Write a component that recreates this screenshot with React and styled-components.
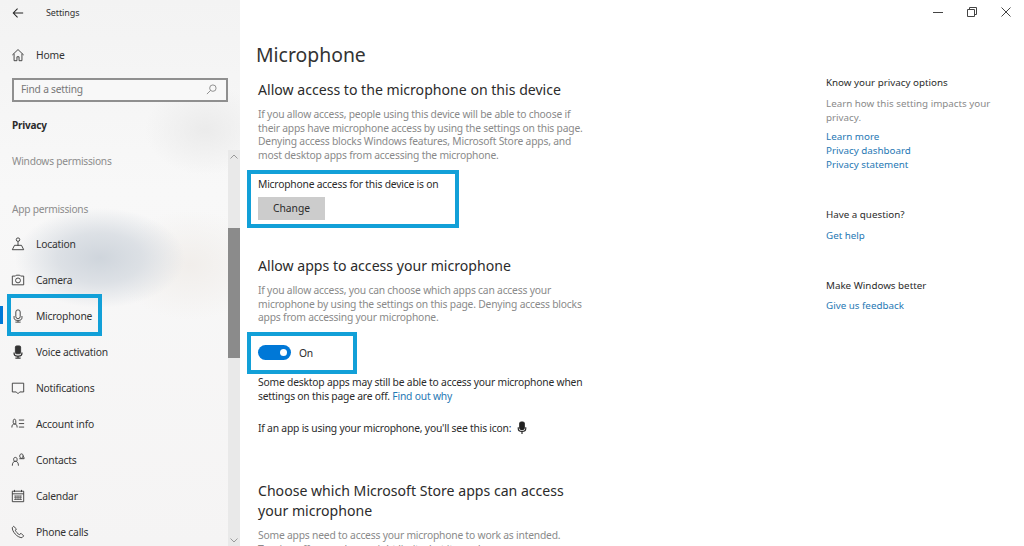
import React from "react";
import styled, { createGlobalStyle } from "styled-components";

const GlobalStyle = createGlobalStyle`
  html, body { margin: 0; padding: 0; background: #fff; }
  body { font-family: "Noto Sans", "Open Sans", "Liberation Sans", sans-serif; color: #222; }
  * { box-sizing: border-box; }
`;

// Thin line icons, drawn to look like the Segoe MDL2 glyphs
const Svg = ({ children, size = 14, fill = "none", color = "#333", width = 1 }) => (
  <svg width={size} height={size} viewBox="0 0 16 16" fill={fill} stroke={color} strokeWidth={width}>
    {children}
  </svg>
);

const icons = {
  location: (
    <Svg>
      <circle cx="8" cy="3" r="2" />
      <path d="M8 5v5M1.500 14.500l2.500-5h8l2.500 5z" />
    </Svg>
  ),
  camera: (
    <Svg>
      <path d="M1.500 3.500h3.500l1-1h4l1 1h3.500v10h-13z" />
      <circle cx="8" cy="8.500" r="2.800" />
    </Svg>
  ),
  mic: (
    <Svg>
      <rect x="5.500" y="1" width="5" height="10" rx="2.400" />
      <path d="M3.500 8v2c0 2 1.500 3 3.500 3h2c2 0 3.500-1 3.500-3V8M8 13v2M5 15h6" />
    </Svg>
  ),
  voice: (
    <Svg>
      <rect x="5" y="1" width="6" height="9" rx="1.500" fill="#333" />
      <path d="M3.500 8.500v1c0 2 1.500 3.200 3.500 3.200h2c2 0 3.500-1.200 3.500-3.200v-1M8 12.700v2.300M5 15h6" strokeWidth="1.400" />
    </Svg>
  ),
  notifications: (
    <Svg>
      <path d="M1.500 2.500h13v10H10l-2 2-2-2H1.500z" />
    </Svg>
  ),
  account: (
    <Svg>
      <path d="M1 12c0-3 1-4 3-4s3 1 3 4M2.500 6c0-3 .5-3.500 1.500-3.500S5.500 3 5.500 6 5 8 4 8 2.500 7 2.500 6zM9 3.500h6M9 7.500h6M9 11.500h6" />
    </Svg>
  ),
  contacts: (
    <Svg>
      <path d="M1.500 14.500c0-3.500 1.500-5 3.500-5s3.500 1.500 3.500 5M3 7.500C3 5.500 4 5 5 5s2 .5 2 2.500-1 2-2 2-2-.5-2-2zM9.500 6.500H15c0-2-1-3-2-3M10 3.500C10 1.800 11 1 12 1s2 .8 2 2.500-1 2.500-2 2.500-2-.8-2-2.500z" />
    </Svg>
  ),
  calendar: (
    <Svg>
      <path d="M1.500 2.500h13v12h-13zM1.500 5.500h13M4 1v2.500M12 1v2.500" />
      <path d="M3.500 8h9M3.500 10h9M3.500 12h9M5.500 7.500v5M8 7.500v5M10.500 7.500v5" strokeWidth=".7" />
    </Svg>
  ),
  phone: (
    <Svg>
      <path d="M3 1.500L1.500 3c-.5 4 5.500 11.500 11 11.500l2-2-3-3-2 1.500C7.500 10 5.500 7.500 5 6l1.200-1.500z" />
    </Svg>
  ),
};

const navItems = [
  { label: "Location", icon: "location" },
  { label: "Camera", icon: "camera" },
  { label: "Microphone", icon: "mic", active: true },
  { label: "Voice activation", icon: "voice" },
  { label: "Notifications", icon: "notifications" },
  { label: "Account info", icon: "account" },
  { label: "Contacts", icon: "contacts" },
  { label: "Calendar", icon: "calendar" },
  { label: "Phone calls", icon: "phone" },
];

const App = () => (
  <>
    <GlobalStyle />
    <Page>
      <Sidebar>
        <SideContent>
          <TitleRow>
            <BackButton>
              <svg width="12" height="12" viewBox="0 0 14 14" fill="none" stroke="#222" strokeWidth="1.200">
                <path d="M13 7H1.500M6.500 2L1.500 7l5 5" />
              </svg>
            </BackButton>
            <AppName>Settings</AppName>
          </TitleRow>
          <HomeRow>
            <Svg>
              <path d="M1.500 8L8 1.800 14.500 8M3.500 6.500v8h3.300v-4.500h2.400v4.500h3.300v-8" />
            </Svg>
            <span>Home</span>
          </HomeRow>
          <SearchBox>
            <SearchHint>Find a setting</SearchHint>
            <svg width="11" height="11" viewBox="0 0 12 12" fill="none" stroke="#888" strokeWidth="1">
              <circle cx="7.500" cy="4.500" r="3.500" />
              <path d="M5 7l-4 4" />
            </svg>
          </SearchBox>
          <SectionName>Privacy</SectionName>
          <GroupLabel $top={21}>Windows permissions</GroupLabel>
          <GroupLabel $top={34}>App permissions</GroupLabel>
          <NavList>
            {navItems.map((item) => (
              <NavItem key={item.label}>
                {item.active && <ActiveBar />}
                {item.active && <NavHighlight />}
                <NavIcon>{icons[item.icon]}</NavIcon>
                <span>{item.label}</span>
              </NavItem>
            ))}
          </NavList>
        </SideContent>
        <ScrollTrack>
          <ScrollArrow>
            <svg width="8" height="5" viewBox="0 0 8 5" fill="none" stroke="#999">
              <path d="M.5 4.500L4 1l3.500 3.500" />
            </svg>
          </ScrollArrow>
          <ScrollThumb />
          <ScrollRest />
          <ScrollArrow>
            <svg width="8" height="5" viewBox="0 0 8 5" fill="none" stroke="#999">
              <path d="M.5.500L4 4 7.500.500" />
            </svg>
          </ScrollArrow>
        </ScrollTrack>
      </Sidebar>

      <Main>
        <PageTitle>Microphone</PageTitle>
        <Heading>Allow access to the microphone on this device</Heading>
        <Description>
          If you allow access, people using this device will be able to choose if
          <br />
          their apps have microphone access by using the settings on this page.
          <br />
          Denying access blocks Windows features, Microsoft Store apps, and
          <br />
          most desktop apps from accessing the microphone.
        </Description>
        <AccessBox>
          <BodyText>Microphone access for this device is on</BodyText>
          <ChangeButton>Change</ChangeButton>
        </AccessBox>
        <Heading $top={28}>Allow apps to access your microphone</Heading>
        <Description>
          If you allow access, you can choose which apps can access your
          <br />
          microphone by using the settings on this page. Denying access blocks
          <br />
          apps from accessing your microphone.
        </Description>
        <ToggleBox>
          <Toggle>
            <Knob />
          </Toggle>
          <BodyText>On</BodyText>
        </ToggleBox>
        <BodyText>
          Some desktop apps may still be able to access your microphone when
          <br />
          settings on this page are off. <InlineLink>Find out why</InlineLink>
        </BodyText>
        <IconNote>
          If an app is using your microphone, you'll see this icon:
          <svg width="12" height="14" viewBox="0 0 16 18" fill="none" stroke="#222" strokeWidth="1.500">
            <rect x="5" y="1" width="6" height="10" rx="2" fill="#222" />
            <path d="M3 8v2c0 2 2 3.500 5 3.500s5-1.500 5-3.500V8M8 13.500V17" />
          </svg>
        </IconNote>
        <StoreHeading>
          Choose which Microsoft Store apps can access
          <br />
          your microphone
        </StoreHeading>
        <Description>
          Some apps need to access your microphone to work as intended.
          <br />
          Turning off access here might limit what it can do.
        </Description>
      </Main>

      <Aside>
        <WindowControls>
          <svg width="10" height="10" viewBox="0 0 10 10" stroke="#444">
            <path d="M0 5.500h10" />
          </svg>
          <svg width="10" height="10" viewBox="0 0 10 10" fill="none" stroke="#444">
            <path d="M.5 2.500h7v7h-7zM2.500 2.500v-2h7v7h-2" />
          </svg>
          <svg width="10" height="10" viewBox="0 0 10 10" stroke="#444">
            <path d="M.5.500l9 9M9.500.500l-9 9" />
          </svg>
        </WindowControls>
        <AsideTitle $top={59}>Know your privacy options</AsideTitle>
        <AsideText>
          Learn how this setting impacts your
          <br />
          privacy.
        </AsideText>
        <AsideLink $top={5}>Learn more</AsideLink>
        <AsideLink>Privacy dashboard</AsideLink>
        <AsideLink>Privacy statement</AsideLink>
        <AsideTitle $top={36}>Have a question?</AsideTitle>
        <AsideLink $top={7}>Get help</AsideLink>
        <AsideTitle $top={36}>Make Windows better</AsideTitle>
        <AsideLink $top={6}>Give us feedback</AsideLink>
      </Aside>
    </Page>
  </>
);

const Page = styled.div`
  display: grid;
  grid-template-columns: 240px 586px 198px;
  width: 1024px;
  height: 546px;
  overflow: hidden;
  background: #fff;
`;

const Sidebar = styled.nav`
  display: flex;
  height: 546px;
  overflow: hidden;
  background:
    radial-gradient(ellipse 85px 50px at 100px 258px, #cfd5dc 0%, rgba(214, 219, 225, 0.8) 50%, rgba(240, 240, 240, 0) 100%),
    radial-gradient(ellipse 75px 55px at 190px 265px, #f1eeeb 0%, rgba(240, 240, 240, 0) 100%),
    radial-gradient(ellipse 60px 45px at 205px 130px, #ebebeb 0%, rgba(240, 240, 240, 0) 100%),
    linear-gradient(180deg, #f3f3f3 0%, #f8f8f8 35%, #f5f4f4 100%);
`;

const SideContent = styled.div`
  width: 228px;
  flex: none;
`;

const TitleRow = styled.div`
  display: flex;
  align-items: center;
  height: 25px;
  padding-left: 12px;
`;

const BackButton = styled.div`
  display: flex;
  width: 34px;
`;

const AppName = styled.div`
  font-size: 9px;
  letter-spacing: -0.1px;
  color: #333;
`;

const HomeRow = styled.div`
  display: flex;
  align-items: center;
  gap: 11px;
  height: 36px;
  margin-top: 12px;
  padding-left: 11px;
  font-size: 10.300px;
  letter-spacing: -0.2px;
  color: #333;
`;

const SearchBox = styled.div`
  display: flex;
  align-items: center;
  justify-content: space-between;
  width: 216px;
  height: 24px;
  margin: 5px 0 0 12px;
  padding: 0 9px 2px 7px;
  border: 2px solid #8f8f8f;
  background: #f8f8f8;
`;

const SearchHint = styled.span`
  font-size: 10.200px;
  letter-spacing: -0.2px;
  color: #777;
`;

const SectionName = styled.div`
  margin: 15px 0 0 12px;
  font-size: 10px;
  letter-spacing: -0.2px;
  line-height: 16px;
  font-weight: 700;
  color: #2b2b2b;
`;

const GroupLabel = styled.div`
  margin: ${({ $top }) => $top}px 0 0 12px;
  font-size: 10.200px;
  letter-spacing: -0.25px;
  line-height: 14px;
  color: #8c8c8c;
`;

const NavList = styled.div`
  margin-top: 10px;
`;

const NavItem = styled.div`
  position: relative;
  display: flex;
  align-items: center;
  height: 36px;
  padding-left: 11px;
  font-size: 10.300px;
  letter-spacing: -0.22px;
  color: #333;
`;

const NavIcon = styled.span`
  display: flex;
  width: 25px;
`;

const ActiveBar = styled.span`
  position: absolute;
  left: 0;
  top: 8px;
  width: 3px;
  height: 18px;
  background: #0078d7;
`;

const NavHighlight = styled.span`
  position: absolute;
  left: 7px;
  top: -4px;
  width: 95px;
  height: 42px;
  border: 4px solid #12a0d8;
`;

const ScrollTrack = styled.div`
  display: flex;
  flex-direction: column;
  width: 12px;
  height: 396px;
  margin-top: 150px;
  background: #e9e9e9;
`;

const ScrollArrow = styled.div`
  display: flex;
  align-items: center;
  justify-content: center;
  height: 12px;
`;

const ScrollThumb = styled.div`
  height: 130px;
  margin-top: 66px;
  background: #8b8b8b;
`;

const ScrollRest = styled.div`
  flex: 1;
`;

const Main = styled.main`
  padding: 41px 0 0 18px;
`;

const PageTitle = styled.h1`
  margin: 0 0 0 -2px;
  font-size: 19.400px;
  line-height: 27px;
  font-weight: 400;
  color: #333;
`;

const Heading = styled.h2`
  margin: ${({ $top }) => $top ?? 12}px 0 0;
  font-size: 14.100px;
  line-height: 20px;
  font-weight: 400;
  color: #2b2b2b;
`;

const Description = styled.p`
  margin: 8px 0 0;
  font-size: 10.300px;
  letter-spacing: -0.2px;
  line-height: 13.700px;
  color: #8a8a8a;
`;

const BodyText = styled.div`
  font-size: 10.300px;
  letter-spacing: -0.2px;
  line-height: 14px;
  color: #2b2b2b;
`;

const AccessBox = styled.div`
  width: 212px;
  height: 58px;
  margin: 7px 0 0 -11px;
  padding: 3px 0 0 7px;
  border: 4px solid #12a0d8;
`;

const ChangeButton = styled.div`
  display: flex;
  align-items: center;
  justify-content: center;
  width: 67px;
  height: 23px;
  margin-top: 6px;
  background: #cccccc;
  font-size: 10.300px;
  color: #2b2b2b;
`;

const ToggleBox = styled.div`
  display: flex;
  align-items: center;
  gap: 8px;
  width: 110px;
  height: 42px;
  margin: 7px 0 1px -11px;
  padding-left: 7px;
  border: 4px solid #12a0d8;
`;

const Toggle = styled.div`
  display: flex;
  align-items: center;
  justify-content: flex-end;
  width: 33px;
  height: 15px;
  padding-right: 4px;
  border-radius: 8px;
  background: #0078d7;
`;

const Knob = styled.span`
  width: 7px;
  height: 7px;
  border-radius: 50%;
  background: #fff;
`;

const InlineLink = styled.span`
  color: #1f78b4;
`;

const IconNote = styled(BodyText)`
  display: flex;
  align-items: center;
  gap: 5px;
  margin-top: 18px;
`;

const StoreHeading = styled(Heading)`
  margin-top: 46px;
`;

const Aside = styled.aside`
  padding-top: 7px;
`;

const WindowControls = styled.div`
  display: flex;
  gap: 24px;
  height: 10px;
  margin-left: 107px;
`;

const AsideTitle = styled.div`
  margin-top: ${({ $top }) => $top}px;
  font-size: 9.800px;
  line-height: 14px;
  color: #2b2b2b;
`;

const AsideText = styled.div`
  margin-top: 7px;
  font-size: 9.800px;
  line-height: 14px;
  color: #8a8a8a;
`;

const AsideLink = styled.div`
  margin-top: ${({ $top }) => $top ?? 0}px;
  font-size: 9.800px;
  line-height: 14px;
  color: #1f78b4;
`;

export default App;
